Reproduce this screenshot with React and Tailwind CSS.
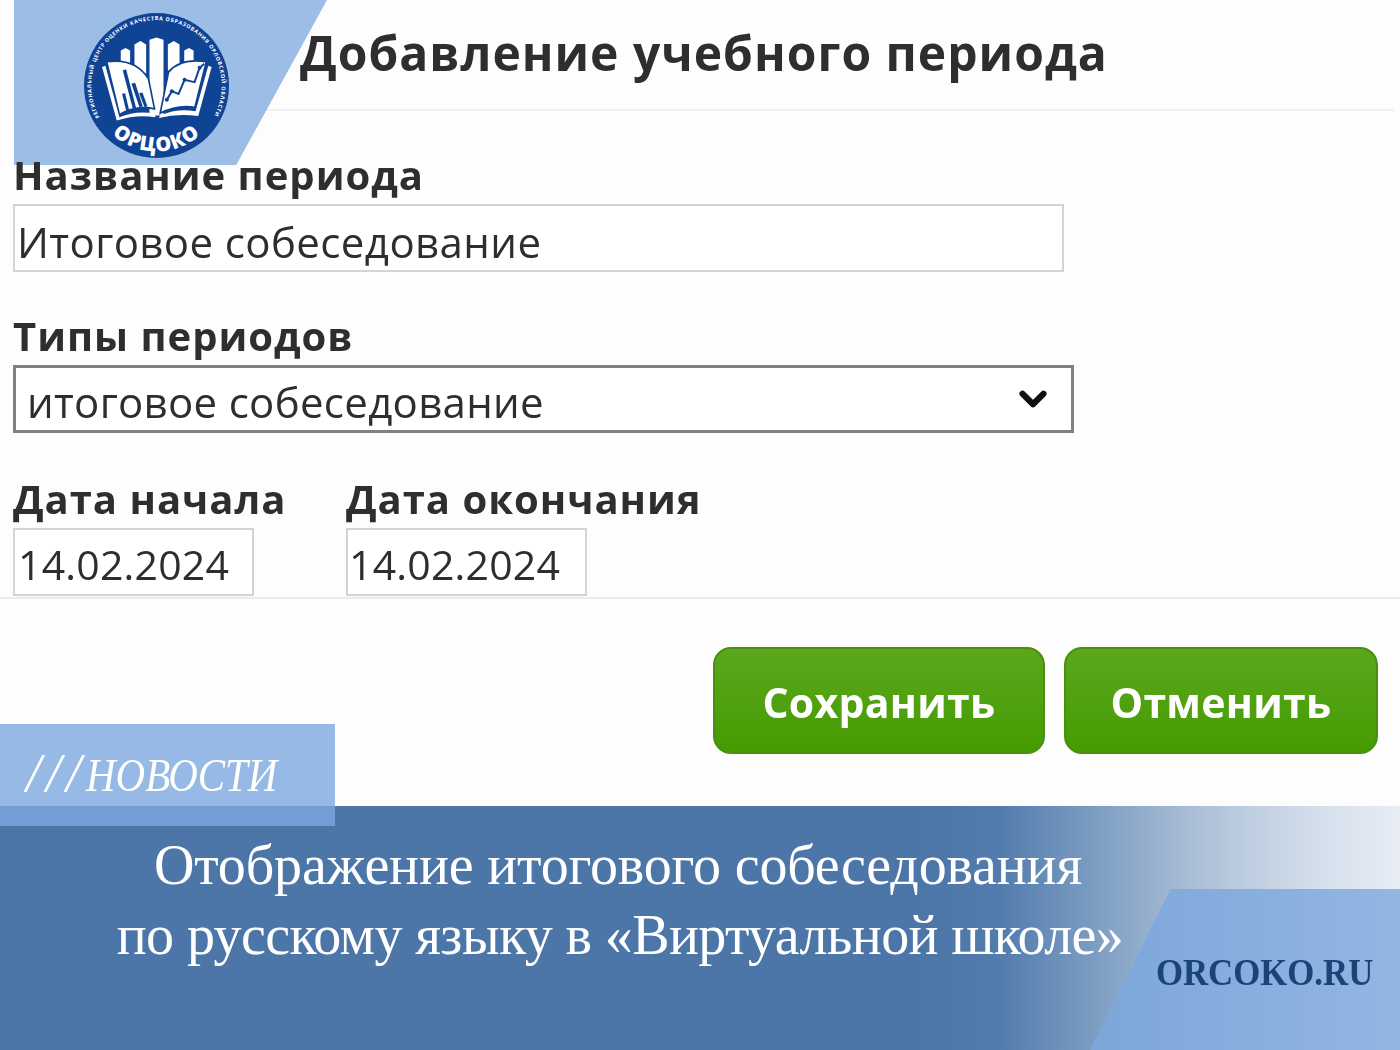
import { ChevronDown } from 'lucide-react';

const sans = "font-['Open_Sans',sans-serif]";
const serif = "font-['Liberation_Serif',serif]";
const navy = '#0f4394';

// Round ORCOKO logo, coordinates are 3x of the screenshot crop
const Logo = () => (
  <svg viewBox="252 38 434 434" className="w-[145px] h-[145px]">
    <defs>
      <path id="ring" d="M299 350 A195 195 0 1 1 639 350" fill="none" />
      <path id="ringBottom" d="M312 375 A198 198 0 0 0 626 375" fill="none" />
    </defs>
    <circle cx="469" cy="255" r="217" fill={navy} />
    <text fontSize="16" fill="#fff" fontFamily="'Open Sans', sans-serif" fontWeight="700">
      <textPath href="#ring" textLength="805">
        РЕГИОНАЛЬНЫЙ ЦЕНТР ОЦЕНКИ КАЧЕСТВА ОБРАЗОВАНИЯ ОРЛОВСКОЙ ОБЛАСТИ
      </textPath>
    </text>
    <g fill="#fff">
      <path d="M362 150 L376 143 L390 150 V195 H362 Z" />
      <path d="M403 132 L421 122 L438 132 V220 H403 Z" />
      <path d="M448 118 L469 111 L490 118 V345 H448 Z" />
      <path d="M503 132 L521 122 L538 132 V210 H503 Z" />
      <path d="M552 150 L566 143 L580 150 V195 H552 Z" />
    </g>
    <g fill="#fff" stroke={navy} strokeWidth="5">
      <path d="M320 184 Q405 172 445 235 L463 325 Q410 312 358 342 Z" />
      <path d="M618 184 Q540 172 505 215 L480 338 Q530 312 584 320 Z" />
    </g>
    <g fill="#fff">
      <path d="M306 200 L316 196 L358 350 Q410 328 464 340 L466 350 Q410 340 350 360 Z" />
      <path d="M634 200 L624 196 L586 332 Q530 322 480 345 L476 352 Q530 338 594 346 Z" />
    </g>
    <g fill={navy}>
      <path d="M368 210 L378 206 L408 322 L398 324 Z" />
      <path d="M366 280 L375 278 L388 332 L379 334 Z" />
      <path d="M394 250 L405 247 L428 318 L418 320 Z" />
      <path d="M417 278 L427 276 L442 318 L433 319 Z" />
    </g>
    <path d="M500 298 L515 272 L535 280 L553 238 L583 245 L598 202 L612 190" fill="none" stroke={navy} strokeWidth="6" />
    <circle cx="500" cy="298" r="6" fill={navy} />
    <circle cx="515" cy="272" r="6" fill={navy} />
    <circle cx="553" cy="238" r="6" fill={navy} />
    <circle cx="598" cy="202" r="6" fill={navy} />
    <text fontSize="60" fill="#fff" fontFamily="'Open Sans', sans-serif" fontWeight="800" letterSpacing="3">
      <textPath href="#ringBottom" startOffset="50%" textAnchor="middle">ОРЦОКО</textPath>
    </text>
  </svg>
);

const Field = ({ label, children, className = '' }) => (
  <div className={className}>
    <div className="h-[52px] text-[40px] leading-[46px] font-bold text-[#2e2e2e] tracking-[1px] whitespace-nowrap">{label}</div>
    {children}
  </div>
);

const Box = ({ className = '', children }) => (
  <div className={`flex items-center bg-white text-[#2e2e2e] ${className}`}>{children}</div>
);

const GreenButton = ({ label, className = '' }) => (
  <button className={`h-[107px] pt-[4px] rounded-[18px] border-2 border-[#4a8f10] bg-gradient-to-b from-[#5ba71b] to-[#459b00] text-[41px] font-bold tracking-[0.3px] text-white ${className}`}>
    {label}
  </button>
);

export default function App() {
  return (
    <div className={`relative w-[1400px] h-[1050px] overflow-hidden bg-[#fdfdfd] flex flex-col ${sans}`}>
      <header className="h-[111px] ml-[14px] mr-[6px] border-b-2 border-[#f0f0f0] pl-[286px] pb-[4px] flex items-center blur-[0.6px]">
        <h1 className="text-[48px] font-bold text-[#2e2e2e] tracking-[1px] whitespace-nowrap">Добавление учебного периода</h1>
      </header>

      {/* Logo plate sits over the header, the first label sits over the plate */}
      <div className="absolute left-[14px] top-0 w-[313px] h-[165px] bg-[#9bbde6] [clip-path:polygon(0_0,100%_0,71%_100%,0_100%)]" />
      <div className="absolute left-[84px] top-[13px]">
        <Logo />
      </div>

      <main className="relative px-[13px] pt-[41px] blur-[0.6px]">
        <Field label="Название периода">
          <Box className="w-[1051px] h-[68px] border-2 border-[#d4d4d4] pl-[2px] pt-[6px] text-[42px] tracking-[0.4px]">Итоговое собеседование</Box>
        </Field>
        <Field label="Типы периодов" className="mt-[41px]">
          <Box className="w-[1061px] h-[68px] border-[3px] border-[#808080] pl-[11px] pr-[17px] justify-between text-[42px]">
            <span className="pt-[4px] tracking-[0.3px]">итоговое собеседование</span>
            <ChevronDown className="w-[42px] h-[42px] text-[#111]" strokeWidth={3.5} />
          </Box>
        </Field>
        <div className="flex gap-[60px] mt-[43px]">
          <Field label="Дата начала" className="w-[273px]">
            <Box className="w-[241px] h-[68px] border-2 border-[#d4d4d4] pl-[3px] pt-[6px] text-[41px] tracking-[0.2px]">14.02.2024</Box>
          </Field>
          <Field label="Дата окончания">
            <Box className="w-[241px] h-[68px] border-2 border-[#d4d4d4] pl-[1px] pt-[6px] text-[41px] tracking-[0.2px]">14.02.2024</Box>
          </Field>
        </div>
      </main>

      <div className="h-[2px] mt-[1px] bg-[#ecece2]" />

      <div className="flex justify-end gap-[19px] pr-[22px] pt-[48px] blur-[0.6px]">
        <GreenButton label="Сохранить" className="w-[332px]" />
        <GreenButton label="Отменить" className="w-[314px]" />
      </div>

      <section className={`relative mt-auto h-[244px] bg-[linear-gradient(to_right,#4c76a8_66%,#527cad_71.4%,#7f9fc3_78.6%,#aec0d8_85.7%,#cfdbe9_92.9%,#e8edf5_100%)] ${serif}`}>
        <div className="pt-[24px] pr-[164px] text-center text-white text-[56px] leading-[70px]">
          <div className="tracking-[-0.15px]">Отображение итогового собеседования</div>
          <div className="tracking-[-0.6px] pl-[4px]">по русскому языку в «Виртуальной школе»</div>
        </div>
        <div className="absolute right-0 bottom-0 w-[310px] h-[161px] bg-gradient-to-r from-[#7ca6d9] to-[#93b6e3] [clip-path:polygon(26%_0,100%_0,100%_100%,0_100%)] flex items-center justify-end pr-[27px] pt-[6px]">
          <span className="text-[37px] font-bold text-[#1a4478] origin-right scale-x-[0.94]">ORCOKO.RU</span>
        </div>
      </section>

      <div className={`absolute left-0 top-[724px] w-[335px] h-[102px] bg-[#7da8de]/80 pl-[26px] pt-[18px] text-white italic leading-[62px] whitespace-nowrap ${serif}`}>
        <span className="text-[54px] tracking-[5px]">///</span>
        <span className="inline-block text-[46px] origin-left scale-x-[0.89]">НОВОСТИ</span>
      </div>
    </div>
  );
}
